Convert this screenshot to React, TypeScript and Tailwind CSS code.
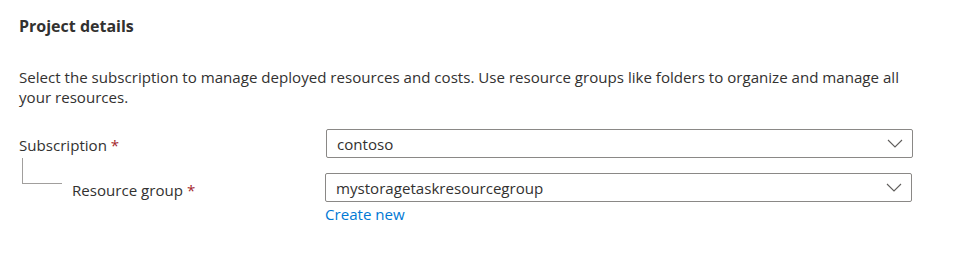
import { ReactNode } from "react";

function Chevron() {
  return (
    <svg width="16" height="9" viewBox="0 0 16 9" fill="none" className="shrink-0">
      <path d="M1 1l7 7 7-7" stroke="#605e5c" strokeWidth="1.1" />
    </svg>
  );
}

function Select({ value }: { value: string }) {
  return (
    <div className="flex h-[29px] w-[587px] items-center justify-between rounded-[2px] border border-[#8a8886] bg-white pl-[10px] pr-[9px]">
      <span className="truncate">{value}</span>
      <Chevron />
    </div>
  );
}

function Label({ children }: { children: ReactNode }) {
  return (
    <span>
      {children} <span className="text-[#a4262c]">*</span>
    </span>
  );
}

export default function App() {
  return (
    <div
      className="h-[257px] w-[955px] overflow-hidden bg-white pl-[19px] pt-[15px] text-[15.1px] leading-[20px] text-[#323130]"
      style={{ fontFamily: '"Open Sans", "Noto Sans", sans-serif' }}
    >
      <h2 className="text-[16px] font-bold leading-[22px]">Project details</h2>

      <p className="mt-[30px] w-[910px]">
        Select the subscription to manage deployed resources and costs. Use resource groups like folders to organize and manage all your resources.
      </p>

      <div className="mt-[22px] flex flex-col gap-[15px]">
        {/* Subscription */}
        <div className="flex">
          <div className="w-[307px] pt-[6px]">
            <Label>Subscription</Label>
          </div>
          <Select value="contoso" />
        </div>

        {/* Resource group */}
        <div className="flex">
          <div className="flex w-[306px]">
            <div className="ml-[3px] -mt-[15px] h-[26px] w-[40px] border-b border-l border-[#a19f9d]" />
            <div className="ml-[10px] pt-[7px]">
              <Label>Resource group</Label>
            </div>
          </div>
          <div className="flex flex-col">
            <Select value="mystoragetaskresourcegroup" />
            <a href="#" className="mt-[2px] text-[#0078d4]">
              Create new
            </a>
          </div>
        </div>
      </div>
    </div>
  );
}
